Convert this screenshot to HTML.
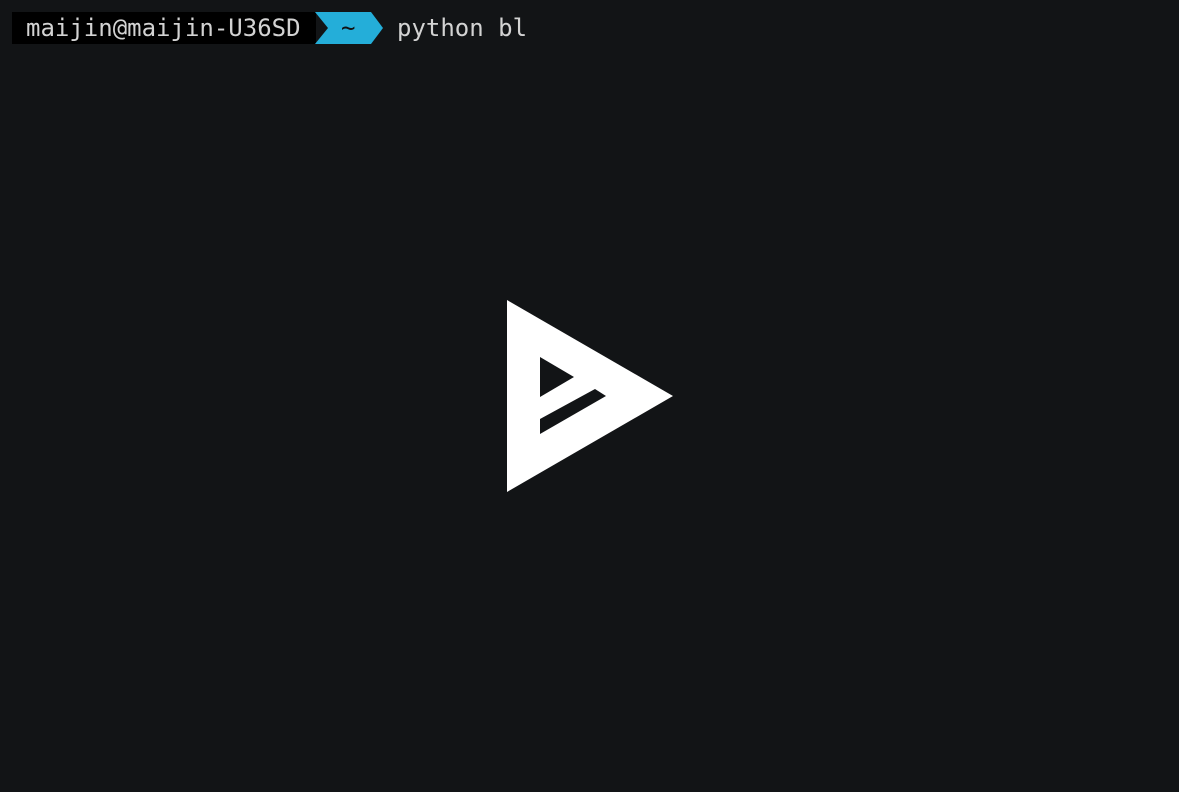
<!DOCTYPE html>
<html><head><style>
html,body{margin:0;padding:0;background:#121416;width:1179px;height:792px;overflow:hidden;}
.t{position:absolute;font-family:"DejaVu Sans Mono","Liberation Mono",monospace;font-size:24px;line-height:32px;top:12px;color:#d3d3d3;white-space:pre;}
</style></head><body>
<svg width="1179" height="792" style="position:absolute;left:0;top:0">
<rect x="12" y="12" width="304" height="32" fill="#000"/>
<polygon points="315,12 371,12 383,28 371,44 315,44 328,28" fill="#24aed9"/>
<polygon points="507,300 673,396 507,492" fill="#fff"/>
<polygon points="540,357 574,377 540,397" fill="#121416"/>
<polygon points="540,419 595,389 606,396 540,434" fill="#121416"/>
</svg>
<div class="t" style="left:26px">maijin@maijin-U36SD</div>
<div class="t" style="left:341px;color:#111">~</div>
<div class="t" style="left:397px">python bl</div>
</body></html>
